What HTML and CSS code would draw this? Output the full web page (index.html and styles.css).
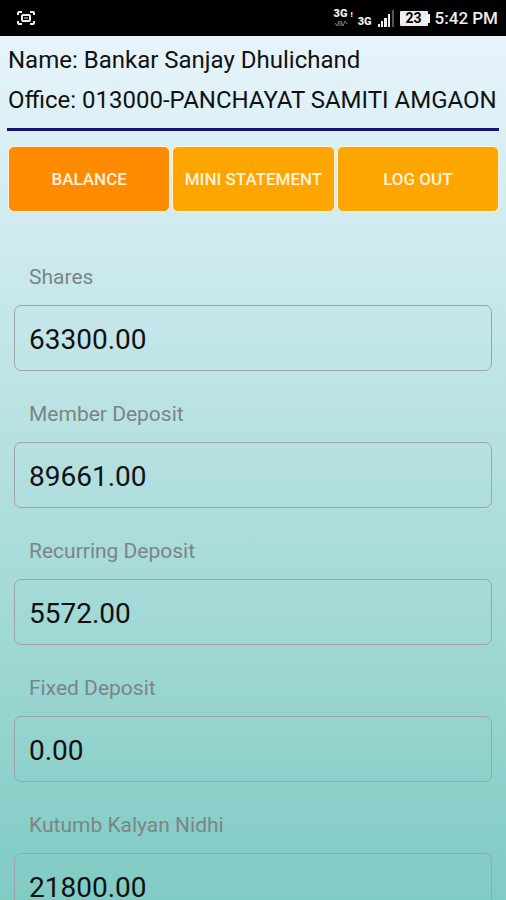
FILE: index.html
```
<!DOCTYPE html>
<html lang="en">
  <head>
    <meta charset="UTF-8" />
    <meta name="viewport" content="width=device-width, initial-scale=1.0" />
    <title>Balance</title>
    <link rel="stylesheet" href="styles.css">
  </head>

  <body>
    <div class="status-bar">
      <svg class="capture-icon" width="20" height="16" viewBox="0 0 20 16" fill="none" stroke="#eee" stroke-width="2">
        <path d="M2 5V3q0-1 1-1h3M14 2h3q1 0 1 1v2M18 11v2q0 1-1 1h-3M6 14H3q-1 0-1-1v-2" />
        <rect x="6" y="5" width="8" height="6" rx="1" />
        <path d="M8 8h4" stroke="#777" />
      </svg>
      <div class="status-icons">
        <div class="network">
          <span class="network-label">3G<small>!</small></span>
          <svg width="14" height="7" viewBox="0 0 14 7" fill="none" stroke="#777">
            <path d="M1 3l2 3 2-5v5M7 6V1l2 5 2-5 2 3" />
          </svg>
        </div>
        <span class="network-label network-low">3G</span>
        <svg class="signal" width="18" height="17" viewBox="0 0 18 17">
          <path d="M1 14h2v3H1zM4 11h2v6H4zM7 8h3v9H7zM11 4h2v13h-2z" fill="#eee" />
          <path d="M15 0h2v17h-2z" fill="#555" />
        </svg>
        <div class="battery">
          <span class="battery-level">23</span>
          <span class="battery-tip"></span>
        </div>
        <span class="clock">5:42 PM</span>
      </div>
    </div>

    <header class="member">
      <p>Name: Bankar Sanjay Dhulichand</p>
      <p>Office: 013000-PANCHAYAT SAMITI AMGAON</p>
    </header>

    <nav class="tabs">
      <button type="button" class="tab active">BALANCE</button>
      <button type="button" class="tab">MINI STATEMENT</button>
      <button type="button" class="tab">LOG OUT</button>
    </nav>

    <main class="accounts">
      <div class="field">
        <label for="shares">Shares</label>
        <input id="shares" type="text" value="63300.00" readonly />
      </div>
      <div class="field">
        <label for="member-deposit">Member Deposit</label>
        <input id="member-deposit" type="text" value="89661.00" readonly />
      </div>
      <div class="field">
        <label for="recurring-deposit">Recurring Deposit</label>
        <input id="recurring-deposit" type="text" value="5572.00" readonly />
      </div>
      <div class="field">
        <label for="fixed-deposit">Fixed Deposit</label>
        <input id="fixed-deposit" type="text" value="0.00" readonly />
      </div>
      <div class="field">
        <label for="kutumb">Kutumb Kalyan Nidhi</label>
        <input id="kutumb" type="text" value="21800.00" readonly />
      </div>
    </main>
  </body>
</html>
```
FILE: styles.css
```
* {
  margin: 0;
  padding: 0;
  box-sizing: border-box;
}

body {
  height: 100vh;
  display: flex;
  flex-direction: column;
  font-family: Roboto, sans-serif;
  color: #111;
  background: linear-gradient(#ebf6fd, #80cbc4);
}

.status-bar {
  flex: none;
  height: 36px;
  padding: 0 8px 0 16px;
  display: flex;
  align-items: center;
  justify-content: space-between;
  background-color: #000;
  color: #eee;
}

.status-icons {
  display: flex;
  align-items: center;
  gap: 5px;
}

.network {
  display: flex;
  flex-direction: column;
}

.network-label {
  font-size: 11px;
  font-weight: 900;
  line-height: 10px;
}

.network-label small {
  margin-left: 3px;
  font-size: 8px;
}

.network-low {
  margin-top: 8px;
}

.battery {
  display: flex;
  align-items: center;
}

.battery-level {
  width: 28px;
  height: 15px;
  border-radius: 1px;
  background-color: #eee;
  color: #000;
  font-size: 14px;
  font-weight: 700;
  line-height: 15px;
  text-align: center;
}

.battery-tip {
  width: 2px;
  height: 9px;
  background-color: #eee;
}

.clock {
  font-size: 17px;
  font-weight: 500;
}

.member {
  flex: none;
  margin: 0 7px;
  padding: 4px 1px 8px;
  border-bottom: 3px solid #1a1273;
  font-size: 24px;
  line-height: 40px;
  white-space: nowrap;
}

.tabs {
  flex: none;
  display: grid;
  grid-template-columns: repeat(3, 1fr);
  gap: 2px;
  padding: 15px 7px 0 8px;
}

.tab {
  height: 66px;
  border: 1px solid #fff3df;
  border-radius: 6px;
  background-color: #ffa500;
  color: #fff3df;
  font-family: inherit;
  font-size: 17px;
  font-weight: 500;
  white-space: nowrap;
}

.tab.active {
  background-color: #ff8c00;
}

.accounts {
  flex: 1;
  min-height: 0;
  display: flex;
  flex-direction: column;
  gap: 31px;
  padding: 53px 14px 16px;
  overflow-y: auto;
  scrollbar-width: none;
}

.field {
  display: flex;
  flex-direction: column;
  gap: 16px;
}

.field label {
  padding-left: 15px;
  color: #7b8586;
  font-size: 21px;
  line-height: 24px;
}

.field input {
  width: 100%;
  height: 66px;
  padding: 2px 14px 0;
  border: 1px solid #a0a4a8;
  border-radius: 7px;
  background: transparent;
  color: #111;
  font-family: inherit;
  font-size: 28px;
}
```
